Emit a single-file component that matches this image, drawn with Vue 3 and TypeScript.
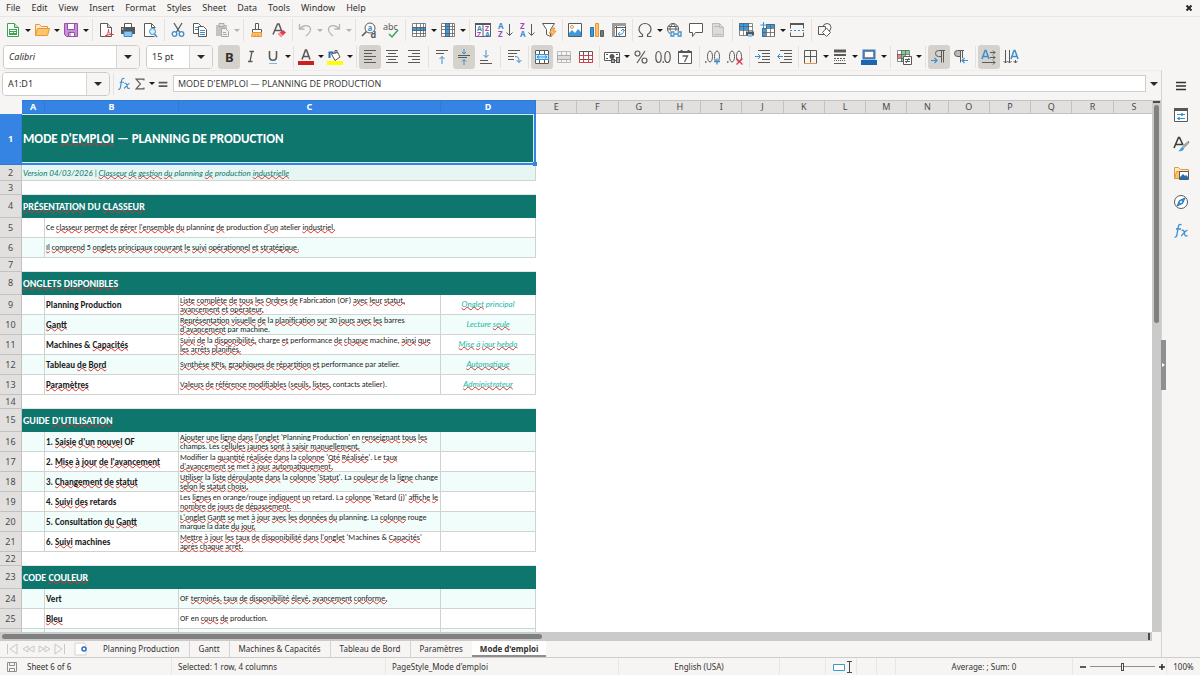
<script setup lang="ts">
import { h, ref } from 'vue'

type Tool = { id?: string; label?: string; menu?: boolean; on?: boolean; off?: boolean; sep?: 'wide' | 'thin' }

const menus = ['File', 'Edit', 'View', 'Insert', 'Format', 'Styles', 'Sheet', 'Data', 'Tools', 'Window', 'Help']

const wide: Tool = { sep: 'wide' }
const thin: Tool = { sep: 'thin' }
const t = (id: string, label: string, more: Partial<Tool> = {}): Tool => ({ id, label, ...more })

const standardBar: Tool[] = [
  t('new', 'New', { menu: true }), t('open', 'Open', { menu: true }), t('save', 'Save', { menu: true }), wide,
  t('pdf', 'Export as PDF'), t('print', 'Print'), t('preview', 'Print preview'), wide,
  t('cut', 'Cut'), t('copy', 'Copy'), t('paste', 'Paste', { menu: true, off: true }), wide,
  t('clone', 'Clone formatting'), t('clear', 'Clear formatting'), thin,
  t('undo', 'Undo', { menu: true, off: true }), t('redo', 'Redo', { menu: true, off: true }), wide,
  t('find', 'Find and replace'), t('spell', 'Spelling'), wide,
  t('row', 'Row', { menu: true }), t('column', 'Column', { menu: true }), wide,
  t('sort', 'Sort'), t('asc', 'Sort ascending'), t('desc', 'Sort descending'), t('filter', 'AutoFilter'), thin,
  t('image', 'Insert image'), t('chart', 'Insert chart'), t('pivot', 'Pivot table'), thin,
  t('omega', 'Special character', { menu: true }), t('link', 'Hyperlink'), t('comment', 'Comment'), t('header', 'Headers and footers', { off: true }), wide,
  t('printarea', 'Define print area'), t('freeze', 'Freeze rows and columns', { menu: true }), t('split', 'Split window'), wide,
  t('shapes', 'Draw functions'),
]

const formatBar: Tool[] = [
  t('bold', 'Bold', { on: true }), t('italic', 'Italic'), t('underline', 'Underline', { menu: true }), thin,
  t('color', 'Font colour', { menu: true }), t('fill', 'Background colour', { menu: true }), wide,
  t('left', 'Align left', { on: true }), t('center', 'Centre'), t('right', 'Align right'), wide,
  t('top', 'Align top'), t('middle', 'Centre vertically', { on: true }), t('bottom', 'Align bottom'), wide,
  t('wrap', 'Wrap text'), wide,
  t('merge', 'Merge and centre cells', { on: true }), t('mergecells', 'Merge cells', { off: true }), t('unmerge', 'Unmerge cells'), thin,
  t('currency', 'Currency', { menu: true }), t('percent', 'Percent'), t('number', 'Number'), t('date', 'Date'), wide,
  t('adddec', 'Add decimal place'), t('deldec', 'Delete decimal place'), wide,
  t('indent', 'Increase indent'), t('outdent', 'Decrease indent'), thin,
  t('borders', 'Borders', { menu: true }), t('linestyle', 'Border style', { menu: true }), t('linecolor', 'Border colour', { menu: true }), wide,
  t('conditional', 'Conditional formatting', { menu: true }), wide,
  t('ltr', 'Left-to-right', { on: true }), t('rtl', 'Right-to-left'), wide,
  t('horizontal', 'Text direction left to right', { on: true }), t('vertical', 'Text direction top to bottom'),
]

const sideTools = [
  { id: 'menu', label: 'Sidebar settings' }, { id: 'properties', label: 'Properties' }, { id: 'styles', label: 'Styles' },
  { id: 'gallery', label: 'Gallery' }, { id: 'navigator', label: 'Navigator' }, { id: 'fx', label: 'Functions' },
]

const D = '#5a5a58'
const B = '#3a8fd0'
const grid = (c: string) => `<path d="M1.5 2.5h13v11h-13zM1.5 6.5h13M1.5 10.5h13M5.5 2.5v11M10.5 2.5v11" fill="none" stroke="${c}"/>`
const magnifier = `<circle cx="10.500" cy="9.500" r="3" fill="#d7ecfa" stroke="${B}"/><path d="M12.500 12l2.500 3" stroke="${B}" stroke-width="1.500"/>`
const pilcrow = (x: number, fill: string) => `<g transform="translate(${x} 0)"><path d="M5 1.500h6M7.500 1.500v12M9.500 1.500v12" fill="none" stroke="${D}"/><path d="M7.500 1.500H4.500a3 3 0 0 0 0 6h3z" fill="${fill}" stroke="${D}"/></g>`

const icons: Record<string, string> = {
  new: '<path d="M2.500 1.500h7l4 4v9h-11z" fill="#fff" stroke="#3aa655"/><path d="M9.500 1.500v4h4" fill="#bfe5c8" stroke="#3aa655"/><path d="M4 7h8v6H4z" fill="#3aa655"/><path d="M5 8.500h6M5 10.500h3M9 10.500h2" stroke="#fff"/>',
  open: '<path d="M1.500 13.500v-11h4l2 2h6v2" fill="#fde8c8" stroke="#e8963a"/><path d="M1.500 13.500l2-7h12l-2 7z" fill="#fbc56d" stroke="#e8963a"/>',
  save: '<path d="M1.500 1.500h13v13h-11l-2-2z" fill="#c98fd6" stroke="#9a4fae"/><path d="M4.500 1.500h7v6h-7z" fill="#fff" stroke="#9a4fae"/><path d="M5.500 10.500h6v4h-6z" fill="#fff" stroke="#9a4fae"/><path d="M7 11v3" stroke="#9a4fae"/>',
  pdf: `<path d="M2.500 1.500h7l4 4v9h-11z" fill="#fff" stroke="${D}"/><path d="M9.500 1.500v4h4" fill="#ddd" stroke="${D}"/><path d="M6.500 14.500c3-1 4-4 4-7 0 4 2 5 5 5-3 0-6 0-9 2z" fill="none" stroke="#e0394a"/>`,
  print: `<path d="M4.500 1.500h7v4h-7z" fill="#fff" stroke="${D}"/><path d="M1 5h14v7H1z" fill="#55585b"/><path d="M4 9.500h8v5H4z" fill="#8cc4ee" stroke="#3a8fd0"/><path d="M2 7h1.500" stroke="#fff"/>`,
  preview: `<path d="M12.500 14.500h-10v-13h7l3 3v2" fill="#fff" stroke="${D}"/><path d="M9.500 1.500v4h4" fill="none" stroke="${D}"/>${magnifier}`,
  cut: `<path d="M4 1l5.500 9M12 1L6.500 10" stroke="${D}" stroke-width="1.300"/><circle cx="4.500" cy="12" r="2.300" fill="none" stroke="${B}" stroke-width="1.300"/><circle cx="11.500" cy="12" r="2.300" fill="none" stroke="${B}" stroke-width="1.300"/>`,
  copy: `<path d="M1.500 1.500h5l3 3v7h-8z" fill="#fff" stroke="${D}"/><path d="M3 5.500h3M3 7.500h3" stroke="${B}"/><path d="M6.500 4.500h5l3 3v7h-8z" fill="#fff" stroke="${D}"/><path d="M8 8.500h5M8 10.500h5M8 12.500h5" stroke="${B}"/>`,
  paste: '<path d="M2 3h11v11H2z" fill="#c4c3c1"/><path d="M5 1.500h5v3H5z" fill="#dedddb" stroke="#a9a8a6"/><path d="M7.500 6.500h4l3 3v5h-7z" fill="#f2f1f0" stroke="#a9a8a6"/><path d="M9 10.500h3M9 12.500h4" stroke="#a9a8a6"/>',
  clone: `<path d="M6.500 1.500h3v6h-3z" fill="#fff" stroke="${D}"/><path d="M3.500 7.500h9v3h-9z" fill="#fff" stroke="${D}"/><path d="M3.500 10.500h9v4h-10z" fill="#fbc56d" stroke="#e8963a"/><path d="M6 12v2M9 12v2" stroke="#e8963a"/>`,
  clear: `<path d="M2 12.500L6.500 2h1.500l3 8M4 8.500h6" fill="none" stroke="${D}" stroke-width="1.500"/><path d="M7 12l5-4 3 2.500-5 4.500z" fill="#e8384a"/><path d="M7 12l2-1.500 3 2.800-2 1.700z" fill="#f49aa4"/>`,
  undo: '<path d="M2.500 2v5h5M2.500 7c3-4 10-5 11 0 .4 2-1 4-4.500 7" fill="none" stroke="#b5b4b2" stroke-width="1.300"/>',
  redo: '<path d="M13.500 2v5h-5M13.500 7c-3-4-10-5-11 0-.4 2 1 4 4.500 7" fill="none" stroke="#b5b4b2" stroke-width="1.300"/>',
  find: `<circle cx="9" cy="6" r="5" fill="#fff" stroke="${D}"/><path d="M5.500 9.500L1 14" stroke="${D}" stroke-width="1.600"/><text x="6.500" y="8.500" font-size="8" font-weight="700" fill="${B}">a</text><text x="9.500" y="15.500" font-size="9" font-weight="700" fill="${D}">d</text>`,
  spell: `<text x="0" y="8" font-size="9" fill="${D}">abc</text><path d="M6 12l3 3 6-7" fill="none" stroke="#3aa655" stroke-width="1.500"/>`,
  row: `<path d="M1 1h14v14H1z" fill="#fff"/><path d="M1 5h14v4H1z" fill="#3a9be0"/><path d="M1.500 1.500h13v13h-13zM1.500 5.500h13M1.500 8.500h13M1.500 11.500h13M5.500 1.500v13M9.500 1.500v13M12.500 1.500v13" fill="none" stroke="${D}" stroke-opacity=".75"/>`,
  column: `<path d="M1 1h14v14H1z" fill="#fff"/><path d="M5 1h5v14H5z" fill="#3a9be0"/><path d="M1.500 1.500h13v13h-13zM1.500 4.500h13M1.500 7.500h13M1.500 11.500h13M5.500 1.500v13M9.500 1.500v13M12.500 1.500v13" fill="none" stroke="${D}" stroke-opacity=".75"/>`,
  sort: `<path d="M.5 1.500h15v13H.5zM8 2v12" fill="#fff" stroke="${D}"/><path d="M0 1h16v2H0z" fill="#55585b"/><g font-size="7" font-weight="700"><text x="2" y="9" fill="${B}">A</text><text x="2" y="15" fill="#a349b8">Z</text><text x="10" y="9" fill="#a349b8">Z</text><text x="10" y="15" fill="${B}">A</text></g>`,
  asc: `<g font-size="8" font-weight="700"><text x="1" y="7" fill="${B}">A</text><text x="1" y="15" fill="#a349b8">Z</text></g><path d="M12.500 2v11M9.500 10.500l3 3 3-3" fill="none" stroke="${D}"/>`,
  desc: `<g font-size="8" font-weight="700"><text x="1" y="7" fill="#a349b8">Z</text><text x="1" y="15" fill="${B}">A</text></g><path d="M12.500 2v11M9.500 10.500l3 3 3-3" fill="none" stroke="${D}"/>`,
  filter: `<path d="M1.500 1.500h12l-4 6v7l-4-2V7.500z" fill="#fff" stroke="${D}"/><path d="M12 6l-4 5h3l-1 4 5-6h-3l2-3z" fill="#fbc56d" stroke="#e8963a"/>`,
  image: `<path d="M1.500 1.500h13v13h-13z" fill="#fff" stroke="${D}"/><path d="M2 14v-3l3-3 3 3 3-4 3 3v4z" fill="#3a9be0"/><circle cx="5" cy="5" r="1.500" fill="#fff" stroke="#e8963a"/>`,
  chart: `<path d="M1.500 5.500h3v9h-3z" fill="#3a9be0" stroke="#2472ad"/><path d="M6.500 1.500h3v13h-3z" fill="#fbc56d" stroke="#e8963a"/><path d="M11.500 8.500h3v6h-3z" fill="#77797b" stroke="${D}"/>`,
  pivot: `<path d="M1.500 1.500h13v13h-13zM5.500 1.500v13M1.500 5.500h13" fill="#fff" stroke="${D}"/><path d="M1 1h14v3H1zM1 1h3v14H1z" fill="#9a9c9e"/><path d="M7 12c5 1 6-1 5-5M10 9l2-2 2 2M9 10l-2 2 2 2" fill="none" stroke="${B}"/>`,
  omega: `<path d="M1.500 14.500h4v-2C3 11 2 9 2 7c0-3 2.500-5.500 6-5.500S14 4 14 7c0 2-1 4-3.500 5.500v2h4" fill="none" stroke="${D}" stroke-width="1.200"/>`,
  link: `<circle cx="7" cy="7" r="5.500" fill="#fff" stroke="${D}"/><path d="M1.500 7h11M7 1.500c-4 4-4 7 0 11M7 1.500c4 4 4 7 0 11M2.500 4.500h9" fill="none" stroke="${D}"/><path d="M4 9h12v6H4z" fill="#f6f5f4"/><path d="M8.500 10H5v4h3.500M11.500 10H15v4h-3.500M7 12h6" fill="none" stroke="${B}" stroke-width="1.300"/>`,
  comment: `<path d="M1.500 1.500h13v9h-7l-3 4v-4h-3z" fill="#fff" stroke="${D}"/>`,
  header: '<path d="M2.500 1.500h7l4 4v9h-11z" fill="#dcdbd9" stroke="#bcbbb9"/><path d="M9.500 1.500v4h4" fill="none" stroke="#bcbbb9"/><path d="M4 4.500h5M4 12.500h8" stroke="#bcbbb9"/>',
  printarea: `<path d="M1 1h14v12H1z" fill="#fff"/><path d="M1 1h10v7H1z" fill="#3a9be0"/><path d="M1.500 1.500h13v12h-13zM1.500 4.500h13M1.500 8.500h13M5.500 1.500v12M10.500 1.500v12" fill="none" stroke="${D}" stroke-opacity=".7"/><path d="M8 9.500h8v4H8z" fill="#55585b"/><path d="M10 12h4v3h-4z" fill="#8cc4ee"/>`,
  freeze: `<path d="M2 2h13v13H2z" fill="#fff"/><path d="M6 2h9v4H6zM2 6h4v9H2z" fill="#3a9be0"/><path d="M2.500 6.500h12v8h-12zM6.500 2.500h8v12M2.500 10.500h12M6.500 2.500v12M10.500 2.500v12" fill="none" stroke="${D}" stroke-opacity=".75"/><path d="M3.500 0v6M.5 3h6" stroke="${B}"/>`,
  split: `<path d="M1.500 1.500h13v5M1.500 6.500v-5M1.500 10.500v4h13v-4" fill="none" stroke="${D}"/><path d="M1 1h14v2H1z" fill="#55585b"/><path d="M1 8.500h2M5 8.500h2M9 8.500h2M13 8.500h2" stroke="${B}"/>`,
  shapes: `<circle cx="10" cy="5.500" r="4" fill="#fff" stroke="${D}"/><path d="M1.500 4.500h7v8h-7z" fill="#f6f5f4" stroke="${D}"/><path d="M9.500 6l4 4.500-4 4-4-4z" fill="#fff" stroke="${D}"/>`,
  bold: '<text x="4" y="13" font-size="13" font-weight="700" fill="#33312f">B</text>',
  italic: `<path d="M6.500 2.500h4.500M5 12.500h4.500M9 2.500l-2 10" fill="none" stroke="${D}" stroke-width="1.300"/>`,
  underline: `<path d="M4.500 2v5.500c0 5 7 5 7 0V2" fill="none" stroke="${D}" stroke-width="1.600"/><path d="M4 14.500h8" stroke="#7db8ea"/>`,
  color: `<path d="M4 10.500L7.500 1h1L12 10.500M5 7.500h6" fill="none" stroke="${D}" stroke-width="1.600"/><path d="M0 12h16v4H0z" fill="#c9211e"/>`,
  fill: `<path d="M4.500 5l6-2 2.500 5-5 3.500z" fill="#fff" stroke="${D}"/><path d="M8 5V1.500h2v3" fill="none" stroke="${D}"/><path d="M2.500 9V3.500h4" fill="none" stroke="#2472ad" stroke-width="2"/><path d="M0 12h16v4H0z" fill="#ffff00"/>`,
  left: `<path d="M2 1.500h12M2 4.500h8M2 7.500h12M2 10.500h8M2 13.500h12" stroke="${D}"/>`,
  center: `<path d="M2 1.500h12M4 4.500h8M2 7.500h12M4 10.500h8M2 13.500h12" stroke="${D}"/>`,
  right: `<path d="M2 1.500h12M6 4.500h8M2 7.500h12M6 10.500h8M2 13.500h12" stroke="${D}"/>`,
  top: `<path d="M2 1.500h12M2 4.500h8" stroke="${D}"/><path d="M8 15V7.500M5.500 10L8 7.500l2.500 2.500" fill="none" stroke="${B}"/>`,
  middle: `<path d="M2 6.500h12M2 8.500h9" stroke="${D}"/><path d="M8 0v5M6 3l2 2 2-2M8 16v-5.500M6 12.500l2-2 2 2" fill="none" stroke="${B}"/>`,
  bottom: `<path d="M2 11.500h8M2 14.500h12" stroke="${D}"/><path d="M8 1v7.500M5.500 6L8 8.500 10.500 6" fill="none" stroke="${B}"/>`,
  wrap: `<path d="M2 1.500h12M2 4.500h9M2 7.500h6M2 10.500h6" stroke="${D}"/><path d="M9 7.500c4 0 4 2 4 6M10.500 11l2.500 2.500 2.500-2.500" fill="none" stroke="${B}"/>`,
  merge: `<path d="M1 1h14v14H1z" fill="#fff"/><path d="M1.500 1.500h13v13h-13zM1.500 5.500h13M1.500 10.500h13M5.500 1.500v13M10.500 1.500v13" fill="none" stroke="${D}"/><path d="M1.500 5.500h13v5h-13z" fill="#d7ecfa" stroke="${B}"/><path d="M3 8h10M5 6.500L3 8l2 1.500M11 6.500L13 8l-2 1.500" fill="none" stroke="${B}"/>`,
  mergecells: `${grid('#bcbbb9')}<path d="M1.500 6.500h13v4h-13z" fill="#dcdbd9" stroke="#aaa9a7"/>`,
  unmerge: `<path d="M1 1h14v14H1z" fill="#fff"/>${grid(D)}<path d="M1.500 6.500h13v7h-13zM5.500 6.500v7M10.500 6.500v7" fill="none" stroke="#e0394a"/>`,
  currency: `<path d="M.5 3.500h15v8H.5z" fill="#fff" stroke="${D}"/><circle cx="8" cy="7.500" r="2.500" fill="#55585b"/><path d="M2 5.500h2M12 5.500h2M2 9.500h2" stroke="${D}"/><path d="M7 10h4v4H7zM12 8h4v6h-4z" fill="#55585b"/><path d="M8 12h2M13 10h2M13 12h2" stroke="#fff"/>`,
  percent: `<circle cx="4.500" cy="4.500" r="2.500" fill="none" stroke="${D}" stroke-width="1.200"/><circle cx="11.500" cy="11.500" r="2.500" fill="none" stroke="${D}" stroke-width="1.200"/><path d="M12 2L4 14" stroke="${D}" stroke-width="1.200"/>`,
  number: `<ellipse cx="3.500" cy="8" rx="2.700" ry="5.500" fill="none" stroke="${D}" stroke-width="1.200"/><ellipse cx="12.500" cy="8" rx="2.700" ry="5.500" fill="none" stroke="${D}" stroke-width="1.200"/><path d="M7.500 13h1.500" stroke="${D}" stroke-width="1.500"/>`,
  date: `<path d="M1.500 2.500h13v12h-13z" fill="#fff" stroke="${D}"/><path d="M1 2h14v2H1zM3.500 1h2v3h-2zM10.500 1h2v3h-2z" fill="#55585b"/><path d="M5.500 7h5l-3 6" fill="none" stroke="${D}" stroke-width="1.300"/>`,
  adddec: `<path d="M0 13h1.500" stroke="${D}" stroke-width="1.500"/><ellipse cx="5" cy="7.500" rx="2.500" ry="5.500" fill="none" stroke="${D}"/><ellipse cx="12" cy="7.500" rx="2.500" ry="5.500" fill="none" stroke="${D}"/><path d="M9 12.500h6M12 9.500v6" stroke="${B}" stroke-width="1.300"/>`,
  deldec: `<path d="M0 13h1.500" stroke="${D}" stroke-width="1.500"/><ellipse cx="5" cy="7.500" rx="2.500" ry="5.500" fill="none" stroke="${D}"/><ellipse cx="12" cy="7.500" rx="2.500" ry="5.500" fill="none" stroke="${D}"/><path d="M9.500 9.500l6 6M15.500 9.500l-6 6" stroke="#e0394a" stroke-width="1.300"/>`,
  indent: `<path d="M3 1.500h12M7 4.500h8M7 7.500h8M7 10.500h8M3 13.500h12" stroke="${D}"/><path d="M0 7.500h5M3 5l2.500 2.500L3 10" fill="none" stroke="${B}"/>`,
  outdent: `<path d="M3 1.500h12M7 4.500h8M7 7.500h8M7 10.500h8M3 13.500h12" stroke="${D}"/><path d="M1 7.500h5M3 5L.5 7.500 3 10" fill="none" stroke="${B}"/>`,
  borders: `<path d="M1.500 14V1.500h12V14M7.500 1.500v12M1.500 7.500h12" fill="none" stroke="${D}"/><path d="M1 14.500h13" stroke="#e8963a"/>`,
  linestyle: `<path d="M2 2h12" stroke="${D}" stroke-width="3"/><path d="M2 6h12" stroke="${D}" stroke-width="2"/><path d="M2 9.500h12" stroke="${D}" stroke-dasharray="2 1"/><path d="M2 11.500h12" stroke="${D}" stroke-dasharray="1 1"/><path d="M2 14.500h12" stroke="${D}"/>`,
  linecolor: `<path d="M2.500 1.500h11v8h-11z" fill="#fff" stroke="#3f7fb8" stroke-width="2"/><path d="M3.500 2.500h9v6h-9z" fill="none" stroke="${D}" stroke-opacity=".5"/><path d="M0 11h16v5H0z" fill="#1c66b0"/>`,
  conditional: `<path d="M1 1h12v12H1z" fill="#fff"/><path d="M5 1h8v4H5z" fill="#7fce92"/><path d="M1 5h4v4H1z" fill="#ee7f88"/><path d="M5 5h4v8H5z" fill="#7fce92"/><path d="M1.500 1.500h12v11h-12zM1.500 5.500h12M1.500 9.500h12M5.500 1.500v11M9.500 1.500v11" fill="none" stroke="${D}" stroke-opacity=".7"/><path d="M7.500 7.500h8v8h-8z" fill="#fff" stroke="${D}"/><path d="M9 10.500h5M9 12.500h5M13 9l-3 5" stroke="${D}"/>`,
  ltr: `${pilcrow(3, 'none')}<path d="M0 11.500h6M3.500 9L6 11.500 3.500 14" fill="none" stroke="${B}" stroke-width="1.200"/>`,
  rtl: `${pilcrow(0, '#bbb')}<path d="M9 9h7v5H9z" fill="#f6f5f4"/><path d="M15 11.500H9M11.500 9L9 11.500l2.500 2.500" fill="none" stroke="${B}" stroke-width="1.200"/>`,
  horizontal: `<path d="M1 10L4 1.500h1L8 10M2 7.500h5" fill="none" stroke="${B}" stroke-width="1.500"/><path d="M9 3.500h5M12 1.500l2 2-2 2M9 8.500h5M12 6.500l2 2-2 2M1 13.500h13M12 11.500l2 2-2 2" fill="none" stroke="${D}"/>`,
  vertical: `<path d="M8 10l3-8.500h1L15 10M9 7.500h5" fill="none" stroke="${B}" stroke-width="1.500"/><path d="M2.500 1v13M.5 12l2 2 2-2M6.500 1v13M4.500 12l2 2 2-2M12.500 11v3M10.500 12l2 2 2-2" fill="none" stroke="${D}"/>`,
  menu: '<path d="M3 4.500h10M3 8h10M3 11.500h10" stroke="#33312f" stroke-width="1.500"/>',
  properties: `<path d="M1.500 1.500h13v13h-13z" fill="#fff" stroke="${D}"/><path d="M1 1h14v3H1z" fill="#55585b"/><path d="M4 7.500h8M4 11.500h8" stroke="${B}"/><path d="M9 6v3M6 10v3" stroke="${B}" stroke-width="1.500"/>`,
  styles: `<path d="M1 12L5.500 1.500h1L10 9M3 8.500h6" fill="none" stroke="#3d3c3a" stroke-width="1.600"/><path d="M15 5.500l-5 5 1 1 4-4c1-1 1-2 0-2z" fill="#fff" stroke="${D}"/><path d="M5 15c2 0 2-3 4.500-4l1.500 1.500C10.500 15 8 15.500 5 15z" fill="#3a9be0"/>`,
  gallery: `<path d="M1.500 13.500v-11h4l2 2h8v3" fill="#fde8c8" stroke="#e8963a"/><path d="M1.500 13.500l2-7h5v7z" fill="#fbc56d" stroke="#e8963a"/><path d="M6.500 6.500h9v8h-9z" fill="#fff" stroke="${D}"/><path d="M7 14v-2l3-3 2 2 1-1 2 2v2z" fill="#2472ad"/>`,
  navigator: `<circle cx="8" cy="8" r="6.500" fill="#fff" stroke="${D}"/><path d="M12 4l-2.500 5.500L4 12l2.500-5.500z" fill="#3a9be0" stroke="#2472ad"/><circle cx="8" cy="8" r="1" fill="#fff"/>`,
  fx: '<g fill="none" stroke="#3a8fd0" stroke-width="1.300"><path d="M8.500 2c-2-1.500-3 0-3.500 3L4 11.500c-.4 2-1 3-2.500 2.500M3 6h5"/><path d="M8.500 7.500c2-1 2.500 0 3 3s1.500 3 3 2M14.500 7.500c-2-.5-5 5-6.500 5.500"/></g>',
  sum: `<path d="M12.500 4V2.500h-9l5 5.500-5 5.500h9V12" fill="none" stroke="${D}" stroke-width="1.300"/>`,
  equals: `<path d="M3 6.500h10M3 10.500h10" stroke="${D}" stroke-width="2"/>`,
}

type Row = { n: number; kind: 'title' | 'sub' | 'blank' | 'section' | 'para' | 'item'; a?: string; b?: string; c?: string; shade?: boolean }

// A tilde marks a word that the spelling checker flags.
const rows: Row[] = [
  { n: 1, kind: 'title', a: "MODE ~D'EMPLOI — PLANNING DE PRODUCTION" },
  { n: 2, kind: 'sub', a: 'Version 04/03/2026 | ~Classeur ~de ~gestion ~du planning ~de production ~industrielle' },
  { n: 3, kind: 'blank' },
  { n: 4, kind: 'section', a: '~PRÉSENTATION DU ~CLASSEUR' },
  { n: 5, kind: 'para', a: "Ce ~classeur ~permet ~de ~gérer ~l'ensemble ~du planning ~de production ~d'un atelier ~industriel." },
  { n: 6, kind: 'para', a: '~Il ~comprend 5 ~onglets ~principaux ~couvrant ~le ~suivi ~opérationnel ~et ~stratégique.', shade: true },
  { n: 7, kind: 'blank' },
  { n: 8, kind: 'section', a: '~ONGLETS ~DISPONIBLES' },
  { n: 9, kind: 'item', a: 'Planning Production', b: '~Liste ~complète ~de ~tous ~les ~Ordres ~de Fabrication (OF) ~avec ~leur ~statut,\n~avancement ~et ~opérateur.', c: '~Onglet principal' },
  { n: 10, kind: 'item', a: '~Gantt', b: "~Représentation ~visuelle ~de la ~planification ~sur 30 ~jours ~avec ~les barres\n~d'avancement par machine.", c: 'Lecture ~seule', shade: true },
  { n: 11, kind: 'item', a: 'Machines & ~Capacités', b: '~Suivi ~de la ~disponibilité, charge ~et performance ~de ~chaque machine, ~ainsi ~que\n~les ~arrêts ~planifiés.', c: '~Mise ~à ~jour ~hebdo' },
  { n: 12, kind: 'item', a: 'Tableau ~de ~Bord', b: '~Synthèse ~KPIs, ~graphiques ~de ~répartition ~et performance par atelier.', c: '~Automatique', shade: true },
  { n: 13, kind: 'item', a: '~Paramètres', b: '~Valeurs ~de ~référence ~modifiables (~seuils, ~listes, contacts atelier).', c: '~Administrateur' },
  { n: 14, kind: 'blank' },
  { n: 15, kind: 'section', a: "GUIDE ~D'UTILISATION" },
  { n: 16, kind: 'item', a: "1. ~Saisie ~d'un ~nouvel OF", b: "~Ajouter ~une ~ligne ~dans ~l'onglet 'Planning Production' en ~renseignant ~tous ~les\nchamps. Les ~cellules ~jaunes ~sont ~à ~saisir ~manuellement.", shade: true },
  { n: 17, kind: 'item', a: "2. ~Mise ~à ~jour ~de ~l'avancement", b: "Modifier la ~quantité ~réalisée ~dans la ~colonne '~Qté ~Réalisée'. Le ~taux\n~d'avancement ~se met ~à ~jour ~automatiquement." },
  { n: 18, kind: 'item', a: '3. ~Changement ~de ~statut', b: "~Utiliser la ~liste ~déroulante ~dans la ~colonne '~Statut'. La ~couleur ~de la ~ligne change\n~selon ~le ~statut ~choisi.", shade: true },
  { n: 19, kind: 'item', a: '4. ~Suivi ~des retards', b: "Les ~lignes en orange/rouge ~indiquent ~un retard. La ~colonne 'Retard (j)' ~affiche ~le\n~nombre ~de ~jours ~de ~dépassement." },
  { n: 20, kind: 'item', a: '5. Consultation ~du ~Gantt', b: "~L'onglet ~Gantt ~se met ~à ~jour ~avec ~les ~données ~du planning. La ~colonne rouge\nmarque la date ~du ~jour.", shade: true },
  { n: 21, kind: 'item', a: '6. ~Suivi machines', b: "~Mettre ~à ~jour ~les ~taux ~de ~disponibilité ~dans ~l'onglet 'Machines & ~Capacités'\n~après ~chaque ~arrêt." },
  { n: 22, kind: 'blank' },
  { n: 23, kind: 'section', a: 'CODE ~COULEUR' },
  { n: 24, kind: 'item', a: 'Vert', b: 'OF ~terminés, ~taux ~de ~disponibilité ~élevé, ~avancement ~conforme.', shade: true },
  { n: 25, kind: 'item', a: '~Bleu', b: 'OF en ~cours ~de production.' },
  { n: 26, kind: 'item', shade: true },
]

const columns = 'ABCDEFGHIJKLMNOPQRS'.split('')
const Spelled = (props: { text?: string }) =>
  h('span', (props.text ?? '').split(/(~[^\s']+(?:'[^\s'.]+)?)/).map(s => (s.startsWith('~') ? h('span', { class: 'bad' }, s.slice(1)) : s)))
Spelled.props = ['text']

const sheets = ['Planning Production', 'Gantt', 'Machines & Capacités', 'Tableau de Bord', 'Paramètres', "Mode d'emploi"]
const active = ref("Mode d'emploi")
const zoom = ref(50)
</script>

<template>
  <div class="app">
    <nav class="menubar">
      <button v-for="m in menus" :key="m" type="button">{{ m }}</button>
      <button class="close" type="button" aria-label="Close document">
        <svg viewBox="0 0 8 8" width="8" height="8"><path d="M1.500 1.500l5 5M6.500 1.500l-5 5" stroke="#2a2928" stroke-width="2" /></svg>
      </button>
    </nav>

    <div class="toolbar standard">
      <template v-for="(item, i) in standardBar" :key="i">
        <i v-if="item.sep" class="sep" :class="item.sep"></i>
        <template v-else>
          <button class="tool" type="button" :aria-label="item.label" :disabled="item.off">
            <svg viewBox="0 0 16 16" width="16" height="16" v-html="icons[item.id!]"></svg>
          </button>
          <button v-if="item.menu" class="drop" :class="{ off: item.off }" type="button" :aria-label="item.label + ' options'"></button>
        </template>
      </template>
    </div>

    <div class="toolbar formatting">
      <div class="combo font">
        <select aria-label="Font name"><option>Calibri</option></select><i class="knob"></i>
      </div>
      <div class="combo size">
        <select aria-label="Font size"><option>15 pt</option></select><i class="knob"></i>
      </div>
      <template v-for="(item, i) in formatBar" :key="i">
        <i v-if="item.sep" class="sep" :class="item.sep"></i>
        <template v-else>
          <button class="tool" :class="{ on: item.on }" type="button" :aria-label="item.label" :disabled="item.off">
            <svg viewBox="0 0 16 16" width="16" height="16" v-html="icons[item.id!]"></svg>
          </button>
          <button v-if="item.menu" class="drop" type="button" :aria-label="item.label + ' options'"></button>
        </template>
      </template>
    </div>

    <div class="body">
      <main class="work">
        <div class="formula">
          <div class="namebox">
            <input aria-label="Name box" value="A1:D1" />
            <button type="button" aria-label="Named ranges"><i class="tri"></i></button>
          </div>
          <i class="sep wide"></i>
          <button class="fn" type="button" aria-label="Function wizard"><svg viewBox="0 0 16 16" width="14" height="14" v-html="icons.fx"></svg></button>
          <button class="fn" type="button" aria-label="Sum"><svg viewBox="0 0 16 16" width="14" height="14" v-html="icons.sum"></svg></button>
          <button class="drop" type="button" aria-label="Select function"></button>
          <button class="fn" type="button" aria-label="Formula"><svg viewBox="0 0 16 16" width="14" height="14" v-html="icons.equals"></svg></button>
          <input class="line" aria-label="Input line" value="MODE D'EMPLOI — PLANNING DE PRODUCTION" />
          <button class="expand" type="button" aria-label="Expand formula bar"><i class="tri"></i></button>
        </div>

        <div class="view">
          <div class="sheet">
            <table>
              <colgroup>
                <col class="w-head" /><col class="w-a" /><col class="w-b" /><col class="w-c" /><col class="w-d" />
                <col v-for="c in 15" :key="c" />
              </colgroup>
              <thead>
                <tr>
                  <th class="corner"></th>
                  <th v-for="(c, i) in columns" :key="c" scope="col" :class="{ sel: i < 4 }">{{ c }}</th>
                </tr>
              </thead>
              <tbody>
                <tr v-for="r in rows" :key="r.n" :class="[r.kind, { shade: r.shade }]">
                  <th scope="row" :class="{ sel: r.n === 1 }">{{ r.n }}</th>
                  <td v-if="r.kind === 'title' || r.kind === 'sub' || r.kind === 'section'" colspan="4" class="band">
                    <Spelled :text="r.a" /><i v-if="r.kind === 'title'" class="handle"></i>
                  </td>
                  <td v-else-if="r.kind === 'blank'" colspan="4" class="gap"></td>
                  <template v-else-if="r.kind === 'para'">
                    <td class="cell"></td>
                    <td class="cell" colspan="3"><Spelled :text="r.a" /></td>
                  </template>
                  <template v-else>
                    <td class="cell"></td>
                    <td class="cell name"><Spelled :text="r.a" /></td>
                    <td class="cell"><Spelled :text="r.b" /></td>
                    <td class="cell note"><Spelled :text="r.c" /></td>
                  </template>
                  <td colspan="15"></td>
                </tr>
              </tbody>
            </table>
          </div>
          <div class="vbar"><i class="mark"></i><i class="thumb"></i></div>
        </div>
        <div class="hbar"><i class="thumb"></i><i class="mark"></i></div>

        <div class="tabs">
          <div class="pager">
            <button v-for="(d, i) in ['M2.500 2v10M12 2L5 7l7 5z', 'M7 4L2 7l5 3zM13 4L8 7l5 3z', 'M2 4l5 3-5 3zM8 4l5 3-5 3z', 'M11.500 2v10M2 2l7 5-7 5z']" :key="i" type="button" :aria-label="['First sheet', 'Previous sheet', 'Next sheet', 'Last sheet'][i]">
              <svg viewBox="0 0 14 14" width="14" height="14"><path :d="d" fill="none" stroke="#c9c8c6" /></svg>
            </button>
          </div>
          <button class="add" type="button" aria-label="Add sheet">
            <svg viewBox="0 0 14 14" width="14" height="14"><path d="M1 1h9l2 2v10H1z" fill="#fff" stroke="#d4d3d1" /><circle cx="10" cy="7" r="2" fill="#fff" stroke="#2a6fc0" stroke-width="1.500" /></svg>
          </button>
          <button v-for="s in sheets" :key="s" class="tab" :class="{ current: s === active }" type="button" @click="active = s">{{ s }}</button>
        </div>
      </main>

      <aside class="side">
        <button v-for="s in sideTools" :key="s.id" type="button" :aria-label="s.label">
          <svg viewBox="0 0 16 16" width="16" height="16" v-html="icons[s.id]"></svg>
        </button>
        <button class="grip" type="button" aria-label="Hide sidebar"><i></i></button>
      </aside>
    </div>

    <footer class="status">
      <span class="pages">
        <svg viewBox="0 0 12 12" width="12" height="12"><path d="M1.500 1.500h9v9h-9zM3.500 1.500v3h5v-3M3.500 10.500v-3h5v3" fill="none" stroke="#8f8e8c" /></svg>
        Sheet 6 of 6
      </span>
      <span>Selected: 1 row, 4 columns</span>
      <span>PageStyle_Mode d'emploi</span>
      <span class="mid">English (USA)</span>
      <span></span>
      <span class="mode">
        <svg viewBox="0 0 22 12" width="22" height="12"><path d="M1.500 3.500h11v6h-11z" fill="#fff" stroke="#3a9bd0" /><path d="M15 .5h5M15 11.500h5M17.500 .5v11" stroke="#4a4a48" /></svg>
      </span>
      <span></span>
      <span></span>
      <span class="mid">Average: ; Sum: 0</span>
      <span class="zoom">
        <button type="button" aria-label="Zoom out"><svg viewBox="0 0 8 8" width="8" height="8"><path d="M1 4h6" stroke="#2a2928" stroke-width="1.500" /></svg></button>
        <input v-model="zoom" type="range" min="0" max="100" aria-label="Zoom" />
        <button type="button" aria-label="Zoom in"><svg viewBox="0 0 8 8" width="8" height="8"><path d="M1 4h6M4 1v6" stroke="#2a2928" stroke-width="1.500" /></svg></button>
      </span>
      <span class="mid">100%</span>
    </footer>
  </div>
</template>

<style>
body { margin: 0; background: #f6f5f4; }
</style>

<style scoped>
.app { display: flex; flex-direction: column; height: 100vh; overflow: hidden; background: #f6f5f4; color: #33312f; font: 9px/12px "Noto Sans", "Open Sans", sans-serif; }
button { padding: 0; border: 0; background: none; color: inherit; font: inherit; }
input, select { min-width: 0; border: 0; color: inherit; font: inherit; outline: 0; }
svg { display: block; overflow: visible; }
.menubar { display: flex; gap: 11px; align-items: center; height: 16px; padding: 0 7px 0 6px; border-bottom: 1px solid #e8e7e5; }
.close { margin-left: auto; }
.toolbar { display: flex; align-items: center; height: 27px; padding-left: 2px; }
.standard { height: 26px; }
.formatting { padding-left: 3px; }
.tool { flex: none; display: grid; place-items: center; width: 22px; height: 24px; border-radius: 3px; }
.tool.on { background: #d5d1cd; }
.drop { flex: none; display: grid; place-items: center; width: 7px; height: 20px; }
.drop::after { content: ""; display: block; width: 0; border: 3px solid transparent; border-top: 3px solid #1c1b1a; border-bottom: 0; }
.drop.off::after { border-top-color: #b5b4b2; }
.sep { flex: none; height: 22px; background: linear-gradient(#e4e2e0, #e4e2e0) center / 1px 100% no-repeat; }
.sep.wide { width: 6px; }
.sep.thin { width: 4px; }
.combo { position: relative; flex: none; display: flex; height: 24px; box-sizing: border-box; border: 1px solid #cfcbc7; border-radius: 4px; background: #fff; overflow: hidden; font-size: 9px; }
.combo select { flex: 1; padding: 0 5px; appearance: none; background: #fff; }
.font { width: 137px; margin-right: 6px; font-style: italic; }
.size { width: 67px; margin-right: 5px; }
.knob, .namebox button { display: grid; place-items: center; border-left: 1px solid #d9d6d3; background: #f6f5f4; }
.knob { position: absolute; top: 0; right: 0; bottom: 0; width: 22px; pointer-events: none; }
.knob::after, .tri { content: ""; width: 0; border: 4px solid transparent; border-top-color: #2a2928; border-bottom: 0; }
.body { flex: 1; display: flex; min-height: 0; }
.work { flex: 1; display: flex; flex-direction: column; min-width: 0; }
.formula { display: flex; align-items: center; height: 30px; padding: 0 0 4px 2px; box-sizing: border-box; border-top: 1px solid #eeedeb; }
.namebox { display: flex; width: 108px; height: 24px; box-sizing: border-box; border: 1px solid #cfcbc7; border-radius: 4px; overflow: hidden; }
.namebox input { flex: 1; padding: 0 5px; background: #fff; }
.namebox button { width: 23px; }
.fn { flex: none; display: grid; place-items: center; width: 16px; height: 20px; }
.line { flex: 1; height: 17px; box-sizing: border-box; margin-left: 2px; padding: 0 4px; border: 1px solid #d0cecb; background: #fff; font-family: "Open Sans", "Noto Sans", sans-serif; }
.expand { display: grid; place-items: center; width: 15px; height: 20px; }
.view { flex: 1; display: flex; min-height: 0; }
.sheet { flex: 1; min-width: 0; overflow: hidden; background: #fff; }
table { width: calc(100% + 3px); table-layout: fixed; border-spacing: 0; }
.w-head { width: 22px; } .w-a { width: 23px; } .w-b { width: 134px; } .w-c { width: 262px; } .w-d { width: 95px; }
th { box-sizing: border-box; padding: 0; border: solid #c3c2c0; border-width: 0 1px 1px 0; background: #e1e0df; color: #4a4a48; font-weight: 400; line-height: 12px; }
thead th { height: 14px; border-top: 1px solid #c3c2c0; }
.corner { border-color: transparent #f6f5f4 #f6f5f4 transparent; background: #f6f5f4; }
th.sel { border-color: #2f7ad6; background: #3584e4; color: #fff; font-weight: 700; }
td { box-sizing: border-box; padding: 0; vertical-align: middle; text-align: left; white-space: pre; font-family: Carlito, "Lato", sans-serif; }
.item, .para { height: 20px; }
.section { height: 23px; }
.blank { height: 14px; }
.blank .gap { border-bottom: 1px solid #e3e6e5; }
.title { height: 51px; }
.sub { height: 16px; }
.band { padding-left: 1px; }
.section .band, .title .band { background: #0f766e; color: #fff; font-weight: 700; }
.section .band { font-size: 10px; line-height: 12px; }
.title .band { position: relative; font-size: 13px; line-height: 16px; border: solid #3584e4; border-width: 0 2px 2px 0; box-shadow: inset -1px -1px #d7eafc, inset 0 1px #d7eafc; }
.handle { position: absolute; right: -3px; bottom: -3px; width: 4px; height: 4px; background: #3584e4; }
.sub .band { border: solid #cfd3d1; border-width: 0 1px 1px 0; background: #e6f7f3; color: #0f766e; font-family: "Lato", sans-serif; font-size: 8px; font-style: italic; }
.cell { padding-left: 1px; border: solid #cfd3d1; border-width: 0 1px 1px 0; color: #1c1b1a; font-size: 8px; line-height: 9px; }
.shade .cell { background: #f0fdfa; }
.name { font-size: 9px; font-weight: 700; }
.item .note { padding: 0; color: #14b8a6; font-family: "Lato", sans-serif; font-style: italic; text-align: center; }
td :deep(.bad) { text-decoration: underline wavy #e0302a 1px; text-decoration-skip-ink: none; text-underline-offset: -1px; }
.vbar { display: flex; flex-direction: column; align-items: center; width: 9px; background: #cacaca; }
.vbar .mark { width: 7px; height: 2px; margin: 1px 0 2px; background: #4a4a48; }
.vbar .thumb { width: 5px; height: 41%; border-radius: 3px; background: #808080; }
.hbar { display: flex; align-items: center; height: 9px; margin-right: 9px; padding: 0 2px; background: #cacaca; }
.hbar .thumb { width: 47%; height: 5px; border-radius: 3px; background: #808080; }
.hbar .mark { width: 2px; height: 7px; margin-left: auto; background: #4a4a48; }
.tabs { display: flex; height: 16px; font-size: 8px; }
.pager { display: flex; padding-left: 5px; }
.pager button { width: 16px; }
.add { width: 14px; margin: 0 6px 0 5px; }
.tab { padding: 0 9px; border-right: 1px solid #d4d3d1; }
.tab:nth-last-child(2) { border-right: 0; }
.tab.current { padding: 2px 8px 0; border: 0; border-bottom: 2px solid #8f8e8c; background: #fff; font-weight: 700; }
.side { position: relative; display: flex; flex-direction: column; align-items: center; gap: 13px; width: 38px; padding-top: 8px; border-left: 1px solid #d4d3d1; }
.grip { position: absolute; left: -1px; top: 46%; display: grid; place-items: center; width: 5px; height: 50px; background: #8f8f8f; }
.grip i { border: 2px solid transparent; border-left: 3px solid #fff; border-right: 0; }
.status { display: grid; grid-template-columns: 171px 214px 1fr 161px 46px 31px 20px 19px 177px 94px 34px; height: 18px; box-sizing: border-box; border-top: 1px solid #cfcdca; font-size: 8px; }
.status > span { display: flex; align-items: center; padding-left: 6px; border-left: 1px solid #e8e7e5; white-space: nowrap; }
.status > .mid { justify-content: center; padding: 0; }
.status > .pages { gap: 9px; border: 0; }
.zoom button { display: grid; place-items: center; width: 8px; }
.zoom input { flex: 1; height: 12px; margin: 0 3px; appearance: none; background: linear-gradient(#8f8e8c, #8f8e8c) center / 100% 1px no-repeat; }
.zoom input::-webkit-slider-thumb { appearance: none; width: 3px; height: 8px; border: 1px solid #4a4a48; background: #f6f5f4; }
</style>
